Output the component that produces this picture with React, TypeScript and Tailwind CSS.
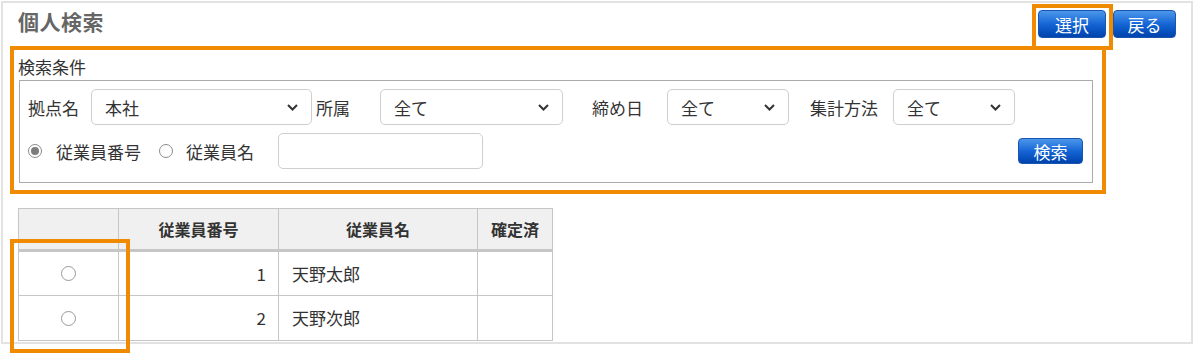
import React from "react";

const Chevron = () => (
  <svg width="11" height="7" viewBox="0 0 11 7" className="shrink-0">
    <path d="M1 1 L5.5 5.5 L10 1" fill="none" stroke="#333" strokeWidth="2" />
  </svg>
);

const Select = ({ value, w }: { value: string; w: string }) => (
  <div
    className={`flex items-center justify-between h-[36px] ${w} rounded-[5px] border border-[#cfcfcf] bg-white pl-[13px] pr-[13px] text-[17px] text-[#333]`}
  >
    <span className="leading-none">{value}</span>
    <Chevron />
  </div>
);

const Radio = ({ checked }: { checked?: boolean }) => (
  <span className="flex items-center justify-center w-[14px] h-[14px] rounded-full border border-[#8c8c8c] bg-white shrink-0">
    {checked && <span className="block w-[8px] h-[8px] rounded-full bg-[#7d7d7d]" />}
  </span>
);

const BlueButton = ({ label, w, h }: { label: string; w: string; h: string }) => (
  <button
    className={`${w} ${h} flex items-center justify-center rounded-[4px] border border-[#1b55ad] bg-linear-to-b from-[#4a97ea] via-[#1565d6] to-[#0043ad] text-white text-[17px] leading-none`}
  >
    {label}
  </button>
);

export default function App() {
  return (
    <div className="relative w-[1199px] h-[356px] bg-white font-['Noto_Sans_CJK_JP',sans-serif] text-[#333]">
      <div className="ml-[1px] mt-[1px] w-[1192px] h-[343px] border-2 border-[#e2e2e2] overflow-hidden flex flex-col pl-[15px] pr-[15px]">
        {/* header */}
        <div className="flex items-start justify-between pt-[7px]">
          <h1 className="text-[21px] font-bold leading-[24px] text-[#666] mt-[-1px] tracking-[0.5px]">個人検索</h1>
          <div className="flex gap-[7px]">
            <BlueButton label="選択" w="w-[68px]" h="h-[28px]" />
            <BlueButton label="戻る" w="w-[63px]" h="h-[28px]" />
          </div>
        </div>

        {/* search conditions */}
        <div className="mt-[19px] text-[17px] leading-[20px]">検索条件</div>
        <div className="ml-[1px] mt-[3px] w-[1074px] border border-[#ababab] pl-[8px] pr-[9px] pt-[8px] pb-[13px] text-[17px]">
          <div className="flex items-center">
            <span className="w-[63px] leading-none">拠点名</span>
            <Select value="本社" w="w-[221px]" />
            <span className="w-[68px] pl-[4px] leading-none">所属</span>
            <Select value="全て" w="w-[183px]" />
            <span className="w-[104px] pl-[29px] leading-none">締め日</span>
            <Select value="全て" w="w-[122px]" />
            <span className="w-[104px] pl-[21px] leading-none">集計方法</span>
            <Select value="全て" w="w-[122px]" />
          </div>
          <div className="flex items-center mt-[8px]">
            <span className="ml-[0px]"><Radio checked /></span>
            <span className="ml-[14px] leading-none">従業員番号</span>
            <span className="ml-[18px]"><Radio /></span>
            <span className="ml-[13px] leading-none">従業員名</span>
            <div className="ml-[24px] w-[205px] h-[36px] rounded-[5px] border border-[#cfcfcf] bg-white" />
            <div className="ml-auto">
              <BlueButton label="検索" w="w-[65px]" h="h-[26px]" />
            </div>
          </div>
        </div>

        {/* table */}
        <table className="mt-[25px] border-collapse text-[17px] w-[535px]">
          <thead>
            <tr className="h-[42px] bg-[#f0f0f0]">
              <th className="w-[100px] border border-[#c6c6c6] border-b-[3px] border-b-[#c6c6c6]"></th>
              <th className="w-[160px] border border-[#c6c6c6] border-b-[3px] font-bold text-[16px]">従業員番号</th>
              <th className="w-[199px] border border-[#c6c6c6] border-b-[3px] font-bold text-[16px]">従業員名</th>
              <th className="w-[75px] border border-[#c6c6c6] border-b-[3px] font-bold text-[16px]">確定済</th>
            </tr>
          </thead>
          <tbody>
            {[
              ["1", "天野太郎"],
              ["2", "天野次郎"],
            ].map(([n, name]) => (
              <tr key={n} className="h-[45px]">
                <td className="border border-[#c6c6c6]">
                  <div className="flex justify-center">
                    <span className="w-[15px] h-[15px] rounded-full border border-[#999] bg-white" />
                  </div>
                </td>
                <td className="border border-[#c6c6c6] text-right pr-[12px]">{n}</td>
                <td className="border border-[#c6c6c6] text-left pl-[13px]">{name}</td>
                <td className="border border-[#c6c6c6]"></td>
              </tr>
            ))}
          </tbody>
        </table>
      </div>

      {/* annotation overlays */}
      <div className="absolute left-[10px] top-[45px] w-[1096px] h-[148px] border-4 border-[#f08a00]" />
      <div className="absolute left-[1032px] top-[3px] w-[81px] h-[46px] border-4 border-[#f08a00]" />
      <div className="absolute left-[10px] top-[238px] w-[120px] h-[114px] border-4 border-[#f08a00]" />
    </div>
  );
}
